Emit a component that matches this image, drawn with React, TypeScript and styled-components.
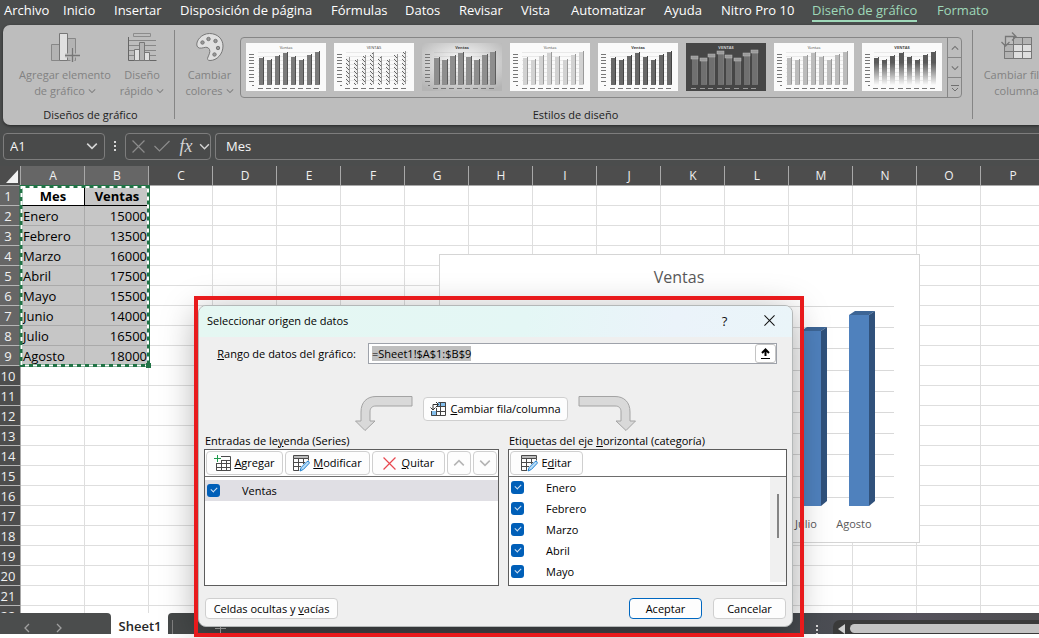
import React, { useEffect, useRef } from "react";
import styled, { createGlobalStyle, css } from "styled-components";

const UI = `"Open Sans", "Noto Sans", sans-serif`;
const CHROME = "#4b4d4d";

const GlobalStyle = createGlobalStyle`
  *, *::before, *::after { box-sizing: border-box; }
  body { margin: 0; background: #fff; font-family: ${UI}; }
  button, input { font-family: inherit; }
`;

/* ---------- shell ---------- */
const Page = styled.div`
  position: relative;
  height: 100vh;
  padding-bottom: 4px;
  background: #fff;
  overflow: hidden;
`;

const Window = styled.div`
  display: flex;
  flex-direction: column;
  height: 100%;
  background: ${CHROME};
`;

const TabBar = styled.nav`
  display: flex;
  flex: none;
  height: 25px;
  padding: 1px 0 0 4px;
  gap: 20px;
  overflow: hidden;
`;

const Tab = styled.button<{ $accent?: boolean; $active?: boolean; $w: number }>`
  flex: none;
  display: flex;
  width: ${(p) => p.$w}px;
  height: 21px;
  padding: 0;
  border: 0;
  border-bottom: 2px solid ${(p) => (p.$active ? "#9fd8b9" : "transparent")};
  background: none;
  color: ${(p) => (p.$accent ? "#9fd8b9" : "#fff")};
  font-size: 13px;
  line-height: 18px;
  white-space: nowrap;
`;

/* ---------- ribbon ---------- */
const Ribbon = styled.section`
  display: flex;
  flex: none;
  height: 100px;
  margin-left: 3px;
  border-radius: 7px 0 0 7px;
  background: #bdbdbd;
  box-shadow: 0 1px 3px rgba(0, 0, 0, 0.5);
  overflow: hidden;
`;

const Group = styled.div<{ $w: number }>`
  flex: none;
  display: flex;
  flex-direction: column;
  justify-content: space-between;
  width: ${(p) => p.$w}px;
  padding: 6px 0 2px 4px;
`;

const GroupLabel = styled.div`
  font-size: 11px;
  line-height: 16px;
  text-align: center;
  color: #222;
`;

const GroupBody = styled.div`
  display: flex;
  justify-content: flex-start;
`;

const Divider = styled.div`
  flex: none;
  width: 1px;
  margin: 5px 0 6px;
  background: #858585;
`;

const RibbonButton = styled.button<{ $w: number }>`
  flex: none;
  display: flex;
  flex-direction: column;
  align-items: center;
  width: ${(p) => p.$w}px;
  padding: 0;
  border: 0;
  background: none;
  color: #828282;
  font-size: 11px;
  line-height: 16px;
  white-space: nowrap;
  svg { flex: none; }
`;

const RibbonIcon = styled.span`
  display: flex;
  height: 36px;
  padding-top: 1px;
`;

const Line = styled.span`
  display: flex;
  align-items: center;
  gap: 3px;
`;

const Gallery = styled.div`
  display: flex;
  height: 61px;
  margin-top: 6px;
  border: 1px solid #868686;
  border-radius: 4px;
  overflow: hidden;
`;

const Thumbs = styled.div`
  display: flex;
  gap: 8px;
  padding: 5px 5px 0;
`;

const ThumbButton = styled.button`
  width: 80px;
  height: 49px;
  padding: 0;
  border: 0;
  background: none;
  display: block;
`;

const Scroller = styled.div`
  display: flex;
  flex-direction: column;
  width: 14px;
  border-left: 1px solid #868686;
`;

const ScrollButton = styled.button`
  flex: 1;
  display: grid;
  place-items: center;
  padding: 0;
  border: 0;
  background: none;
  color: #707070;
  & + & { border-top: 1px solid #868686; }
`;

/* ---------- formula bar ---------- */
const FormulaBar = styled.div`
  display: flex;
  flex: none;
  align-items: center;
  height: 41px;
  padding: 1px 0 0 3px;
`;

const Box = styled.div<{ $w?: number }>`
  display: flex;
  align-items: center;
  flex: ${(p) => (p.$w ? `0 0 ${p.$w}px` : "1")};
  min-width: 0;
  height: 27px;
  border: 1px solid #7d7d7d;
  border-radius: 4px;
  background: #494a4a;
  ${(p) => !p.$w && css`border-right: 0; border-radius: 4px 0 0 4px;`}
`;

const BarInput = styled.input`
  flex: 1;
  min-width: 0;
  padding: 0 0 0 6px;
  border: 0;
  outline: 0;
  background: none;
  color: #f5f5f5;
  font-size: 13px;
`;

const FormulaInput = styled(BarInput)`
  padding-left: 10px;
`;

const BarButton = styled.button<{ $w: number }>`
  flex: none;
  display: grid;
  place-items: center;
  width: ${(p) => p.$w}px;
  height: 25px;
  padding: 0;
  border: 0;
  background: none;
  color: #d5d5d5;
`;

const Fx = styled.span`
  font: italic 18px/20px "Liberation Serif", serif;
`;

const Dots = styled.span<{ $w: number }>`
  flex: none;
  display: grid;
  place-items: center;
  width: ${(p) => p.$w}px;
`;

/* ---------- sheet ---------- */
const Sheet = styled.main`
  position: relative;
  flex: 1;
  min-height: 0;
  overflow: hidden;
  background: #fff;
`;

const Grid = styled.table`
  table-layout: fixed;
  width: 1685px;
  border-collapse: separate;
  border-spacing: 0;
  color: #000;
  font-size: 13px;
  line-height: 18px;
`;

const ColHead = styled.th<{ $sel?: boolean; $corner?: boolean }>`
  height: 20px;
  padding: 1px 0 0 1px;
  border-right: 1px solid #a8a8a8;
  border-bottom: 1px solid #a8a8a8;
  background: ${(p) => (p.$sel ? "#666" : "#4d4d4d")};
  color: #f0f0f0;
  font-size: 12px;
  font-weight: 400;
  line-height: 18px;
  width: ${(p) => (p.$corner ? 21 : 64)}px;
  svg { display: block; margin: 0 0 0 4px; }
`;

const RowHead = styled.th<{ $sel?: boolean }>`
  height: 20px;
  padding: 0 4px 0 0;
  border-right: 1px solid #a8a8a8;
  border-bottom: 1px solid #b5b5b5;
  background: ${(p) => (p.$sel ? "#666" : "#4d4d4d")};
  color: #f0f0f0;
  font-weight: 400;
  text-align: center;
`;

const Cell = styled.td<{ $kind?: "title" | "active" | "text" | "number" }>`
  height: 20px;
  padding: 0 1px 0 2px;
  white-space: nowrap;
  border-right: 1px solid #dedede;
  border-bottom: 1px solid #dedede;
  ${(p) => p.$kind && css`
    background: #c6c6c6;
    border-color: #aaa;
  `}
  ${(p) => (p.$kind === "title" || p.$kind === "active") && css`
    text-align: center;
    font-weight: 700;
    border-color: #000;
  `}
  ${(p) => p.$kind === "active" && css`background: #fff;`}
  ${(p) => p.$kind === "number" && css`text-align: right;`}
`;

const CopyMarquee = styled.svg`
  position: absolute;
  left: 19px;
  top: 17px;
`;

const ChartObject = styled.figure`
  position: absolute;
  left: 439px;
  top: 88px;
  width: 481px;
  height: 289px;
  margin: 0;
  border: 1px solid #d5d5d5;
  background: #fff;
  svg { display: block; }
`;

/* ---------- bottom bar ---------- */
const BottomBar = styled.footer`
  display: flex;
  flex: none;
  height: 21px;
  background: #fff;
  overflow: hidden;
`;

const SheetNav = styled.div`
  display: flex;
  flex: none;
  gap: 22px;
  align-items: center;
  width: 111px;
  padding: 9px 0 0 22px;
  border-radius: 0 4px 0 0;
  background: ${CHROME};
`;

const NavButton = styled.button`
  display: grid;
  place-items: center;
  width: 10px;
  padding: 0;
  border: 0;
  background: none;
  color: #a0a0a0;
`;

const SheetTab = styled.button`
  flex: none;
  width: 57px;
  padding: 5px 0 0 1px;
  border: 0;
  background: #fff;
  color: #262626;
  font-size: 13px;
  font-weight: 600;
  line-height: 16px;
`;

const BottomRest = styled.div`
  display: flex;
  flex: 1;
  border-radius: 4px 0 0 0;
  background: linear-gradient(90deg, #454848 0%, #454a4e 70%, #55525c 85%, #4d4d50 100%);
`;

const AddSheet = styled.button`
  flex: none;
  width: 58px;
  margin: 7px 0 0 4px;
  padding: 0 0 0 42px;
  border: 0;
  border-left: 1px solid #808080;
  background: none;
  color: #b0b0b0;
  display: flex;
`;

const BottomSpacer = styled.div`
  flex: 0 1 581px;
`;

const MoreDots = styled.span`
  flex: none;
  display: flex;
  width: 22px;
  padding: 12px 0 0 5px;
`;

const HScroll = styled.div`
  flex: 1;
  display: flex;
  align-items: center;
  gap: 5px;
  margin-top: 7px;
  padding: 4px 0 1px 5px;
  border-radius: 7px 0 0 0;
  background: #3a3a3a;
  svg { flex: none; }
`;

const HThumb = styled.div`
  flex: 1;
  height: 9px;
  border-radius: 5px 0 0 5px;
  background: #c4c4c4;
`;

/* ---------- dialog ---------- */
const Highlight = styled.div`
  position: absolute;
  left: 194px;
  top: 296px;
  width: 610px;
  padding: 9px 11px 10px 4px;
  &::after {
    content: "";
    position: absolute;
    inset: 0;
    border: 4px solid #e81a1c;
    pointer-events: none;
  }
`;

const Dialog = styled.section`
  border: 1px solid #b4b8b8;
  border-radius: 8px;
  background: #efefef;
  box-shadow: 0 8px 36px rgba(0, 0, 0, 0.36);
  color: #000;
  font-size: 11px;
  line-height: 16px;
  overflow: hidden;
  padding-bottom: 7px;
`;

const TitleBar = styled.header`
  display: flex;
  align-items: center;
  height: 31px;
  padding: 0 0 2px 8px;
  background: linear-gradient(100deg, #e5f7f2 0%, #e4f7f5 55%, #ebf3fa 80%, #eaf5f9 100%);
`;

const Title = styled.h1`
  flex: 1;
  margin: 0;
  font-size: 11px;
  font-weight: 400;
`;

const TitleButton = styled.button`
  display: grid;
  place-items: center;
  width: 45px;
  height: 28px;
  padding: 0;
  border: 0;
  background: none;
  color: #111;
  font-size: 13px;
`;

const RangeRow = styled.div`
  display: flex;
  align-items: center;
  justify-content: flex-end;
  gap: 12px;
  padding: 6px 15px 0 0;
`;

const RangeField = styled.div`
  display: flex;
  align-items: center;
  width: 409px;
  height: 21px;
  padding-left: 3px;
  border: 1px solid #9ea2aa;
  background: #fff;
`;

const RangeInput = styled.input`
  flex: 1;
  min-width: 0;
  height: 15px;
  padding: 0;
  border: 0;
  outline: 0;
  background: none;
  font-size: 11px;
  &::selection { background: #bfbfbf; color: #000; }
`;

const PickButton = styled.button`
  display: grid;
  place-items: center;
  width: 21px;
  height: 19px;
  padding: 0;
  border: 1px solid #c4c4c4;
  border-radius: 3px;
  background: #fff;
`;

const SwitchRow = styled.div`
  display: flex;
  align-items: flex-start;
  justify-content: center;
  gap: 10px;
  height: 36px;
  margin-top: 32px;
`;

const SwitchSlot = styled.div`
  padding-top: 1px;
`;

const Button = styled.button<{ $w: number; $h?: number; $primary?: boolean; $muted?: boolean }>`
  display: flex;
  align-items: center;
  justify-content: center;
  gap: 3px;
  flex: none;
  width: ${(p) => p.$w}px;
  height: ${(p) => p.$h ?? 24}px;
  padding: 0;
  border: 1px solid ${(p) => (p.$primary ? "#0067c0" : "#cfcfcf")};
  border-radius: 4px;
  background: #fdfdfd;
  color: ${(p) => (p.$muted ? "#b5b5b5" : "#000")};
  font-size: 11px;
  line-height: 16px;
  white-space: nowrap;
`;

const Panels = styled.div`
  display: flex;
  gap: 9px;
  padding: 0 5px;
`;

const Panel = styled.section<{ $grow: number }>`
  flex: ${(p) => p.$grow} 1 0;
`;

const PanelTitle = styled.h2`
  margin: 0;
  padding: 0 1px;
  height: 17px;
  font-size: 11px;
  font-weight: 400;
  line-height: 18px;
`;

const ListBox = styled.div`
  height: 137px;
  border: 1px solid #5c5c5c;
  background: #fff;
  display: flex;
  flex-direction: column;
`;

const ListTools = styled.div`
  display: flex;
  flex: none;
  gap: 2px;
  height: 27px;
  padding: 1px;
  border-bottom: 1px solid #6d6d6d;
`;

const ListArea = styled.div`
  display: flex;
  flex: 1;
  min-height: 0;
  padding-bottom: 3px;
`;

const List = styled.ul<{ $top: number }>`
  flex: 1;
  margin: 0;
  padding: ${(p) => p.$top}px 0 0;
  list-style: none;
  overflow: hidden;
`;

const Item = styled.li<{ $selected?: boolean }>`
  background: ${(p) => (p.$selected ? "#e0dfe4" : "transparent")};
`;

const ItemLabel = styled.label`
  display: flex;
  align-items: center;
  gap: 22px;
  height: 21px;
  padding-left: 2px;
`;

const Check = styled.input`
  appearance: none;
  position: relative;
  width: 13px;
  height: 13px;
  margin: 0;
  border-radius: 3px;
  background: #005fb8;
  &::after {
    content: "";
    position: absolute;
    left: 4px;
    top: 3px;
    width: 6px;
    height: 4px;
    border: solid #cfe0f2;
    border-width: 0 0 1px 1px;
    transform: rotate(-45deg);
  }
`;

const VScroll = styled.div`
  width: 16px;
  padding: 17px 0 0 7px;
  background: #f0f0f0;
`;

const VThumb = styled.div`
  width: 2px;
  height: 44px;
  background: #858585;
`;

const Footer = styled.div`
  display: flex;
  gap: 11px;
  padding: 12px 6px 0;
`;

const FooterSpacer = styled.div`
  flex: 1;
`;

/* ---------- icons ---------- */
const Chevron = ({ size = 8, up = false, left = false, right = false }: { size?: number; up?: boolean; left?: boolean; right?: boolean }) => (
  <svg width={size} height={size} viewBox="0 0 10 10" fill="none" stroke="currentColor" strokeWidth="1.3">
    <path d={up ? "M1 7l4-4 4 4" : left ? "M7 1L3 5l4 4" : right ? "M3 1l4 4-4 4" : "M1 3l4 4 4-4"} />
  </svg>
);

const AddElementIcon = () => (
  <svg width="30" height="30" viewBox="0 0 30 30" fill="none" stroke="#878787">
    <path d="M1.500 12.500h8v16h-8zM17.500 6.500h8v22h-8z" fill="#b3b3b3" />
    <path d="M9.500 1.500h8v27h-8z" fill="#e0e0e0" stroke="#777" />
    <path d="M22.500 16v15M15 23.500h15" stroke="#bdbdbd" strokeWidth="4" />
    <path d="M22.500 16v14M15 23.500h15" stroke="#777" strokeWidth="1.400" />
  </svg>
);

const QuickLayoutIcon = () => (
  <svg width="30" height="30" viewBox="0 0 30 30" fill="none" stroke="#878787">
    <path d="M6.500 1.500h17v3h-17z" stroke="#8c8c8c" />
    <path d="M2 8.500h27M2 13.500h27M2 18.500h27M2 23.500h27" />
    <path d="M1.500 5v23.500h28" stroke="#666" />
    <path d="M7.500 17.500h5v11h-5zM17.500 20.500h5v8h-5z" fill="#e0e0e0" stroke="#777" />
    <path d="M12.500 10.500h5v18h-5z" fill="#b3b3b3" stroke="#777" />
  </svg>
);

const PaletteIcon = () => (
  <svg width="30" height="30" viewBox="0 0 30 30" fill="#e0e0e0" stroke="#777">
    <path d="M14.500 1.500c8 0 13.500 5.500 13.500 12.500 0 8-6 14.500-13 14.500-2.500 0-3-1.500-2-3.500 1-2.500 2.500-5 1.500-7.500-1.200-2.500-3.500-2.500-6-1.800-2.700.8-5.500.8-6.500-1.700-1.500-5 4.500-12.500 12.500-12.500z" />
    <g fill="#999">
      <circle cx="7.500" cy="10.500" r="1.700" /><circle cx="13.500" cy="7" r="1.700" /><circle cx="20.500" cy="9" r="1.700" />
      <circle cx="23" cy="16" r="1.700" /><circle cx="19.500" cy="22.500" r="1.700" />
    </g>
  </svg>
);

const SwapIcon = () => (
  <svg width="34" height="32" viewBox="0 0 34 32" fill="none" stroke="#777">
    <path d="M4.500 5.500h27v21h-27z" fill="#dedede" />
    <path d="M14 5.500h17.500v7H14zM4.500 13h9v13.500h-9z" fill="#b3b3b3" stroke="none" />
    <path d="M4.500 12.500h27M4.500 19.500h27M13.500 5.500v21M22.500 5.500v21M4.500 5.500h27v21h-27z" />
    <path d="M0 0h13v12H0z" fill="#bdbdbd" stroke="none" />
    <path d="M5.500 14V4.500H16M1.500 10l4 4 4-4M12 .5l4 4-4 4" strokeWidth="1.300" />
  </svg>
);

const SwapSmallIcon = () => (
  <svg width="17" height="16" viewBox="0 0 17 16" fill="none">
    <path d="M8 1h8v4H8zM1 10h5v5H1z" fill="#83beec" />
    <path d="M8.500 1.500h7v13h-14V10M6 5.500h10M10.500 1.500v13M6 10.500h10M6.500 7v8" stroke="#444" />
    <path d="M3 9V3.500h5M.5 6.500L3 9l2.500-2.500M6 1l2.500 2.500L6 6" stroke="#333" />
  </svg>
);

const AddTableIcon = () => (
  <svg width="17" height="17" viewBox="0 0 17 17" fill="none" stroke="#4a4a4a">
    <path d="M7 1.500h9.500v14h-14V8M7 5.500h9.500M3 8.500h13.500M3 12.500h13.500M7.500 5v11M12.500 5v11" />
    <path d="M3.500 0v7M0 3.500h7" stroke="#1f9a4d" />
  </svg>
);

const EditTableIcon = () => (
  <svg width="17" height="17" viewBox="0 0 17 17" fill="none" stroke="#4a4a4a">
    <path d="M.5 .5h15v3H.5z" fill="#bbb" />
    <path d="M.5 3.500v12H6M15.500 3.500v2M.5 7.500H12M.5 11.500H8M5.500 4v11M10.500 4v5" />
    <path d="M7 16l1.200-3.500L14 6.500c1.500-.8 2.800.6 2 2l-5.700 6z" fill="#b8dcf6" stroke="#1d7fd0" />
  </svg>
);

const Cross = ({ size, color }: { size: number; color: string }) => (
  <svg width={size} height={size} viewBox="0 0 12 12" stroke={color} strokeWidth="1.100">
    <path d="M.5 .5l11 11M11.500 .5l-11 11" />
  </svg>
);

const BentArrow = ({ flip = false }: { flip?: boolean }) => (
  <svg width="58" height="36" viewBox="0 0 58 36">
    <path
      transform={flip ? "translate(58 0) scale(-1 1)" : undefined}
      d="M57 .500V10H21c-4 0-6 2-6 6v9h5L10 34.500.500 25H6V16C6 6 12 .500 21 .500z"
      fill="#d9d9d9"
      stroke="#a3a3a3"
    />
  </svg>
);

const VDots = () => (
  <svg width="3" height="11" viewBox="0 0 3 11" fill="#d8d8d8">
    <path d="M0 0h2v2H0zM0 4h2v2H0zM0 8h2v2H0z" />
  </svg>
);

/* ---------- style thumbnails ---------- */
type ThumbStyle = {
  title: string; bold?: boolean; bg?: string; bar: string; edge: string;
  w?: number; x0?: number; pitch?: number; ink?: string; tags?: boolean;
};

const STYLES: ThumbStyle[] = [
  { title: "Ventas", bar: "#7a7a7a", edge: "#505050" },
  { title: "VENTAS", bar: "url(#hatch)", edge: "#999", w: 4, x0: 12 },
  { title: "Ventas", bold: true, bg: "url(#glow)", bar: "#8e8e8e", edge: "#5c5c5c", w: 6, x0: 12 },
  { title: "Ventas", bar: "#d2d2d2", edge: "#9a9a9a" },
  { title: "Ventas", bold: true, bar: "#686868", edge: "#444" },
  { title: "VENTAS", bold: true, bg: "#464646", bar: "#707070", edge: "#7a7a7a", w: 6, x0: 6, pitch: 8.6, ink: "#d0d0d0", tags: true },
  { title: "Ventas", bar: "#bcbcbc", edge: "#999" },
  { title: "VENTAS", bold: true, bar: "url(#fade)", edge: "url(#fade)", x0: 12, pitch: 8.2 },
];
const TOPS = [15, 17, 13, 10, 14, 17, 12, 9];

const ThumbDefs = () => (
  <defs>
    <pattern id="hatch" width="4" height="4" patternUnits="userSpaceOnUse">
      <path d="M0 0h4v4H0z" fill="#f0f0f0" />
      <path d="M0 0l4 4" stroke="#666" />
    </pattern>
    <radialGradient id="glow" cy="0.4" r="0.7">
      <stop offset="0" stopColor="#fff" /><stop offset="1" stopColor="#b4b4b4" />
    </radialGradient>
    <linearGradient id="fade" x1="0" y1="10" x2="0" y2="42" gradientUnits="userSpaceOnUse">
      <stop offset="0.3" stopColor="#5a5a5a" /><stop offset="1" stopColor="#fafafa" />
    </linearGradient>
  </defs>
);

const StyleThumb = ({ s, defs }: { s: ThumbStyle; defs: boolean }) => {
  const w = s.w ?? 5;
  return (
    <svg width="80" height="49" viewBox="0 0 80 49">
      {defs && <ThumbDefs />}
      <rect width="80" height="48" fill={s.bg ?? "#fafafa"} />
      <text x="40" y="6" textAnchor="middle" fontSize="4" fontWeight={s.bold ? 700 : 400} fill={s.ink ?? "#444"}>{s.title}</text>
      {!s.tags && [9, 13, 17, 21, 25, 29, 33, 37].map((y) => (
        <path key={y} d={`M12 ${y}.5h62`} stroke="#888" strokeOpacity="0.14" />
      ))}
      {!s.tags && [11, 14, 17, 20, 24, 27, 31, 34, 38].map((y) => (
        <rect key={y} x="3" y={y} width="5" height="1" fill="#777" />
      ))}
      {!s.tags && <rect x="6" y="42" width="2" height="1" fill="#777" />}
      {TOPS.map((t, i) => {
        const x = Math.round((s.x0 ?? 13) + i * (s.pitch ?? 8));
        return (
          <g key={i}>
            <rect x={x} y={t} width={w} height={42 - t} fill={s.bar} />
            <path d={`M${x + w - 1} ${t - 1}h1v${42 - t}h-1z`} fill={s.edge} />
            <rect x={x - 1} y="45" width="5" height="1" fill={s.ink ? "#999" : "#777"} />
            {s.tags && <rect x={x - 1} y={t - 2} width="7" height="3" fill="#999" stroke="#bbb" strokeWidth="0.5" />}
          </g>
        );
      })}
    </svg>
  );
};

/* ---------- data ---------- */
const TABS: [string, number][] = [
  ["Archivo", 39], ["Inicio", 31], ["Insertar", 46], ["Disposición de página", 131], ["Fórmulas", 54],
  ["Datos", 34], ["Revisar", 42], ["Vista", 30], ["Automatizar", 73], ["Ayuda", 37], ["Nitro Pro 10", 71],
];
const SALES: [string, number][] = [
  ["Enero", 15000], ["Febrero", 13500], ["Marzo", 16000], ["Abril", 17500],
  ["Mayo", 15500], ["Junio", 14000], ["Julio", 16500], ["Agosto", 18000],
];
const COLS = "ABCDEFGHIJKLMNOPQRSTUVWXYZ".split("");
const ROWS = Array.from({ length: 23 }, (_, i) => i + 1);

const cellFor = (row: number, col: number) => {
  if (col > 1 || row > 9) return <Cell key={col} />;
  if (row === 1) return <Cell key={col} $kind={col ? "title" : "active"}>{col ? "Ventas" : "Mes"}</Cell>;
  return <Cell key={col} $kind={col ? "number" : "text"}>{SALES[row - 2][col]}</Cell>;
};

const SalesChart = () => (
  <svg width="479" height="287" viewBox="0 0 479 287">
    <text x="239" y="28" textAnchor="middle" fontSize="16" fill="#595959">Ventas</text>
    {Array.from({ length: 10 }, (_, i) => Math.round(51 + i * 21.2)).map((y) => (
      <path key={y} d={`M60 ${y}.5h394`} stroke="#d9d9d9" />
    ))}
    {SALES.map(([month, value], i) => {
      const x = 73 + i * 48;
      const top = Math.round(60 + (18000 - value) / 94);
      return (
        <g key={month}>
          <path d={`M${x} ${top}l6-4h20l-6 4z`} fill="#3d6595" />
          <path d={`M${x + 20} ${top}l6-4V246l-6 5z`} fill="#30517b" />
          <rect x={x} y={top} width="20" height={251 - top} fill="#4f81bd" />
          <text x={x + 5} y="273" textAnchor="middle" fontSize="11" fill="#595959">{month}</text>
        </g>
      );
    })}
  </svg>
);

export default function App() {
  const range = useRef<HTMLInputElement>(null);
  useEffect(() => {
    range.current?.focus({ preventScroll: true });
    range.current?.select();
  }, []);

  return (
    <Page>
      <GlobalStyle />
      <Window>
        <TabBar aria-label="Cinta de opciones">
          {TABS.map(([name, w]) => <Tab key={name} $w={w}>{name}</Tab>)}
          <Tab $accent $active $w={105}>Diseño de gráfico</Tab>
          <Tab $accent $w={54}>Formato</Tab>
        </TabBar>

        <Ribbon>
          <Group $w={171}>
            <GroupBody>
              <RibbonButton $w={116}>
                <RibbonIcon><AddElementIcon /></RibbonIcon>
                <Line>Agregar elemento</Line>
                <Line>de gráfico <Chevron /></Line>
              </RibbonButton>
              <RibbonButton $w={38}>
                <RibbonIcon><QuickLayoutIcon /></RibbonIcon>
                <Line>Diseño</Line>
                <Line>rápido <Chevron /></Line>
              </RibbonButton>
            </GroupBody>
            <GroupLabel>Diseños de gráfico</GroupLabel>
          </Group>
          <Divider />
          <Group $w={797}>
            <GroupBody>
              <RibbonButton $w={61}>
                <RibbonIcon><PaletteIcon /></RibbonIcon>
                <Line>Cambiar</Line>
                <Line>colores <Chevron /></Line>
              </RibbonButton>
              <Gallery>
                <Thumbs>
                  {STYLES.map((s, i) => (
                    <ThumbButton key={i} aria-label={`Estilo ${i + 1}`}><StyleThumb s={s} defs={i === 0} /></ThumbButton>
                  ))}
                </Thumbs>
                <Scroller>
                  <ScrollButton aria-label="Subir"><Chevron up /></ScrollButton>
                  <ScrollButton aria-label="Bajar"><Chevron /></ScrollButton>
                  <ScrollButton aria-label="Más">
                    <svg width="8" height="8" viewBox="0 0 8 8" fill="none" stroke="currentColor"><path d="M0 1.500h8M1 4l3 3 3-3" /></svg>
                  </ScrollButton>
                </Scroller>
              </Gallery>
            </GroupBody>
            <GroupLabel>Estilos de diseño</GroupLabel>
          </Group>
          <Divider />
          <Group $w={158}>
            <GroupBody>
              <RibbonButton $w={79}>
                <RibbonIcon><SwapIcon /></RibbonIcon>
                <Line>Cambiar fila/</Line>
                <Line>columna</Line>
              </RibbonButton>
            </GroupBody>
            <GroupLabel>Datos</GroupLabel>
          </Group>
        </Ribbon>

        <FormulaBar>
          <Box $w={102}>
            <BarInput aria-label="Cuadro de nombres" defaultValue="A1" />
            <BarButton $w={24} aria-label="Nombres"><Chevron size={12} /></BarButton>
          </Box>
          <Dots $w={20}><VDots /></Dots>
          <Box $w={86}>
            <BarButton $w={24} aria-label="Cancelar entrada"><Cross size={13} color="#8c8c8c" /></BarButton>
            <BarButton $w={24} aria-label="Introducir">
              <svg width="16" height="12" viewBox="0 0 16 12" fill="none" stroke="#8c8c8c" strokeWidth="1.200"><path d="M.5 6l5 5L15.500 1" /></svg>
            </BarButton>
            <BarButton $w={24} aria-label="Insertar función"><Fx>fx</Fx></BarButton>
            <BarButton $w={12} aria-label="Más funciones"><Chevron size={11} /></BarButton>
          </Box>
          <Dots $w={4} />
          <Box><FormulaInput aria-label="Barra de fórmulas" defaultValue="Mes" /></Box>
        </FormulaBar>

        <Sheet>
          <Grid>
            <thead>
              <tr>
                <ColHead $corner aria-label="Seleccionar todo">
                  <svg width="13" height="13" viewBox="0 0 13 13"><path d="M13 0v13H1z" fill="#f2f2f2" /></svg>
                </ColHead>
                {COLS.map((c, i) => <ColHead key={c} $sel={i < 2}>{c}</ColHead>)}
              </tr>
            </thead>
            <tbody>
              {ROWS.map((r) => (
                <tr key={r}>
                  <RowHead $sel={r < 10}>{r}</RowHead>
                  {COLS.map((_, c) => cellFor(r, c))}
                </tr>
              ))}
            </tbody>
          </Grid>
          <CopyMarquee width="132" height="186" viewBox="0 0 132 186" fill="none">
            <path d="M2 3.500h127.500v179H2z" stroke="#217346" strokeWidth="3" />
            <path d="M2.500 4h126.500v178.500H2.500z" stroke="#fff" strokeWidth="2" strokeDasharray="4 4" />
            <path d="M127 180h5v5h-5z" fill="#217346" />
          </CopyMarquee>
          <ChartObject><SalesChart /></ChartObject>
        </Sheet>

        <BottomBar>
          <SheetNav>
            <NavButton aria-label="Hoja anterior"><Chevron size={10} left /></NavButton>
            <NavButton aria-label="Hoja siguiente"><Chevron size={10} right /></NavButton>
          </SheetNav>
          <SheetTab>Sheet1</SheetTab>
          <BottomRest>
            <AddSheet aria-label="Hoja nueva">
              <svg width="11" height="14" viewBox="0 0 11 14" stroke="currentColor"><path d="M0 8.500h11M5.500 3v11" /></svg>
            </AddSheet>
            <BottomSpacer />
            <MoreDots><VDots /></MoreDots>
            <HScroll>
              <svg width="7" height="10" viewBox="0 0 7 10"><path d="M7 0v10L0 5z" fill="#d0d0d0" /></svg>
              <HThumb />
            </HScroll>
          </BottomRest>
        </BottomBar>
      </Window>

      <Highlight>
        <Dialog role="dialog" aria-labelledby="dialog-title">
          <TitleBar>
            <Title id="dialog-title">Seleccionar origen de datos</Title>
            <TitleButton aria-label="Ayuda">?</TitleButton>
            <TitleButton aria-label="Cerrar"><Cross size={11} color="#111" /></TitleButton>
          </TitleBar>
          <RangeRow>
            <label htmlFor="range"><u>R</u>ango de datos del gráfico:</label>
            <RangeField>
              <RangeInput id="range" ref={range} defaultValue="=Sheet1!$A$1:$B$9" />
              <PickButton aria-label="Seleccionar rango">
                <svg width="9" height="11" viewBox="0 0 9 11" fill="none" stroke="#000" strokeWidth="2">
                  <path d="M4.500 8V2M1 5l3.500-3.500L8 5" /><path d="M0 10.500h9" strokeWidth="1" />
                </svg>
              </PickButton>
            </RangeField>
          </RangeRow>
          <SwitchRow>
            <BentArrow />
            <SwitchSlot>
              <Button $w={145}><SwapSmallIcon /><span><u>C</u>ambiar fila/columna</span></Button>
            </SwitchSlot>
            <BentArrow flip />
          </SwitchRow>
          <Panels>
            <Panel $grow={295}>
              <PanelTitle>Entradas de le<u>y</u>enda (Series)</PanelTitle>
              <ListBox>
                <ListTools>
                  <Button $w={77}><AddTableIcon /><span><u>A</u>gregar</span></Button>
                  <Button $w={85}><EditTableIcon /><span><u>M</u>odificar</span></Button>
                  <Button $w={73}><Cross size={13} color="#e8474f" /><span>&nbsp;<u>Q</u>uitar</span></Button>
                  <Button $w={24} $muted aria-label="Subir"><Chevron size={12} up /></Button>
                  <Button $w={24} $muted aria-label="Bajar"><Chevron size={12} /></Button>
                </ListTools>
                <ListArea>
                  <List $top={3}>
                    <Item $selected><ItemLabel><Check type="checkbox" defaultChecked />Ventas</ItemLabel></Item>
                  </List>
                </ListArea>
              </ListBox>
            </Panel>
            <Panel $grow={279}>
              <PanelTitle>Etiquetas del eje <u>h</u>orizontal (categoría)</PanelTitle>
              <ListBox>
                <ListTools>
                  <Button $w={73}><EditTableIcon /><span>E<u>d</u>itar</span></Button>
                </ListTools>
                <ListArea>
                  <List $top={0}>
                    {SALES.slice(0, 5).map(([m]) => (
                      <Item key={m}><ItemLabel><Check type="checkbox" defaultChecked />{m}</ItemLabel></Item>
                    ))}
                  </List>
                  <VScroll><VThumb /></VScroll>
                </ListArea>
              </ListBox>
            </Panel>
          </Panels>
          <Footer>
            <Button $w={133} $h={21}><span>Celdas ocultas y <u>v</u>acías</span></Button>
            <FooterSpacer />
            <Button $w={73} $h={21} $primary>Aceptar</Button>
            <Button $w={73} $h={21}>Cancelar</Button>
          </Footer>
        </Dialog>
      </Highlight>
    </Page>
  );
}
